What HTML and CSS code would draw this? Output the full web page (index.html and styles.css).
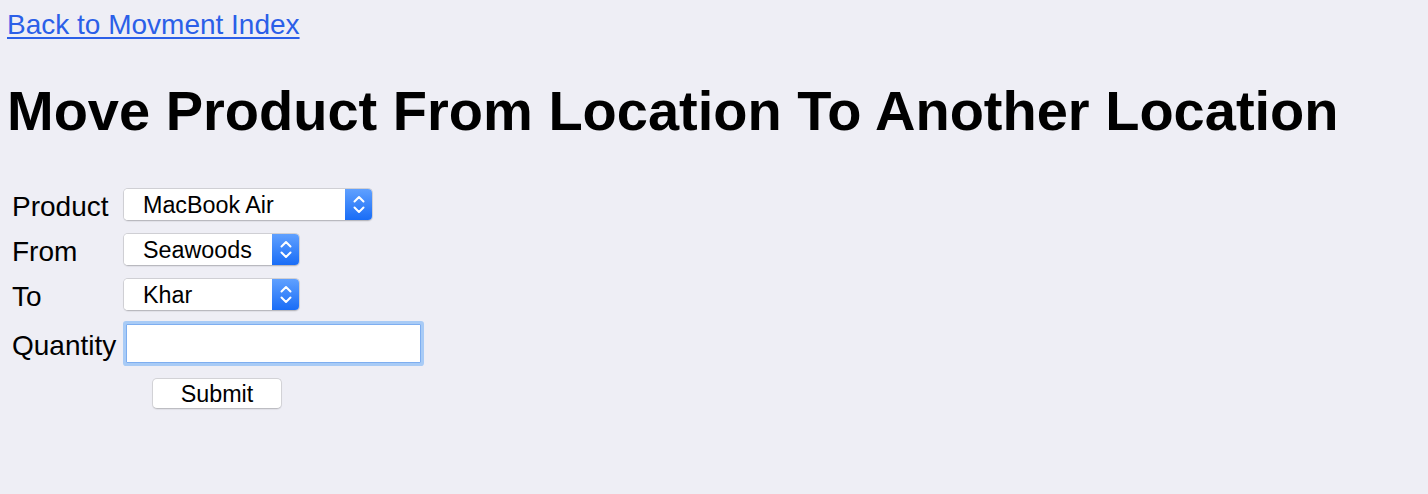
FILE: index.html
```html
<!DOCTYPE html>
<html lang="en">
<head>
<meta charset="utf-8">
<title>Move Product</title>
<link rel="stylesheet" href="styles.css">
</head>
<body>
<p class="nav"><a class="back" href="#">Back to Movment Index</a></p>
<h1 class="title">Move Product From Location To Another Location</h1>
<form class="move-form">
  <label class="field-label" for="product">Product</label>
  <span class="select select-wide">
    <select id="product"><option>MacBook Air</option></select>
    <span class="select-arrow"><svg width="28" height="33" viewBox="0 0 28 33"><polyline points="9.5,13.5 14,9 18.5,13.5"/><polyline points="9.5,19.5 14,24 18.5,19.5"/></svg></span>
  </span>

  <label class="field-label" for="from">From</label>
  <span class="select select-narrow">
    <select id="from"><option>Seawoods</option></select>
    <span class="select-arrow"><svg width="28" height="33" viewBox="0 0 28 33"><polyline points="9.5,13.5 14,9 18.5,13.5"/><polyline points="9.5,19.5 14,24 18.5,19.5"/></svg></span>
  </span>

  <label class="field-label" for="to">To</label>
  <span class="select select-narrow">
    <select id="to"><option>Khar</option></select>
    <span class="select-arrow"><svg width="28" height="33" viewBox="0 0 28 33"><polyline points="9.5,13.5 14,9 18.5,13.5"/><polyline points="9.5,19.5 14,24 18.5,19.5"/></svg></span>
  </span>

  <label class="field-label" for="qty">Quantity</label>
  <input class="qty" id="qty" type="text">

  <button class="submit" type="button">Submit</button>
</form>
</body>
</html>
```

FILE: styles.css
```css
html {
  background: #eeeef5;
}

body {
  margin: 9px 0 0 7px;
  background: #eeeef5;
  font-family: "Liberation Sans", Arial, sans-serif;
  color: #000;
}

.nav {
  margin: 0;
  font-size: 28px;
  line-height: 32px;
}

.back {
  color: #2b5fe8;
  text-decoration: underline;
  text-decoration-thickness: 2px;
  text-underline-offset: 3px;
}

.title {
  margin: 38px 0 37px;
  font-size: 56px;
  line-height: 64px;
  font-weight: bold;
}

.move-form {
  display: grid;
  grid-template-columns: 111px 299px;
  grid-template-rows: 45px 45px 45px 52px 47px;
  align-items: center;
  padding: 2px 0 0 5px;
  width: max-content;
}

.field-label {
  font-size: 28px;
  line-height: 32px;
  padding-top: 5px;
}

.select {
  display: inline-flex;
  height: 33px;
  box-sizing: border-box;
  border: 1px solid #cfcfd4;
  border-bottom-color: #b9b9bf;
  border-radius: 5px;
  overflow: hidden;
  background: #fff;
  box-shadow: 0 1px 1px rgba(0, 0, 0, 0.06);
}

.select-wide {
  width: 250px;
}

.select-narrow {
  width: 177px;
}

.select select {
  flex: 1;
  min-width: 0;
  appearance: none;
  -webkit-appearance: none;
  border: none;
  background: #fff;
  font-family: "Liberation Sans", Arial, sans-serif;
  font-size: 23.3px;
  color: #000;
  padding: 1px 0 0 19px;
  margin: 0;
  outline: none;
}

.select-arrow {
  flex: 0 0 28px;
  display: flex;
  align-items: center;
  justify-content: center;
  background: linear-gradient(#62a2ff, #176bf6);
  margin: -1px -1px -1px 0;
}

.select-arrow svg {
  display: block;
}

.select-arrow polyline {
  fill: none;
  stroke: #fff;
  stroke-width: 2;
  stroke-linecap: round;
  stroke-linejoin: round;
}

.qty {
  box-sizing: border-box;
  width: 295px;
  height: 39px;
  margin: 0 0 0 3px;
  border: 1px solid #7eaef0;
  border-radius: 1px;
  background: #fff;
  box-shadow: 0 0 0 3px #a8cbf6;
  font-family: "Liberation Sans", Arial, sans-serif;
  font-size: 23.3px;
  outline: none;
  padding: 0 6px;
}

.submit {
  grid-column: 1 / span 2;
  justify-self: center;
  box-sizing: border-box;
  width: 130px;
  height: 31px;
  margin: 2px 0 0 0;
  border: 1px solid #d2d2d6;
  border-bottom-color: #bdbdc2;
  border-radius: 5px;
  background: #fff;
  box-shadow: 0 1px 1px rgba(0, 0, 0, 0.06);
  font-family: "Liberation Sans", Arial, sans-serif;
  font-size: 23.3px;
  color: #000;
  padding: 0;
  line-height: 28px;
}
```
